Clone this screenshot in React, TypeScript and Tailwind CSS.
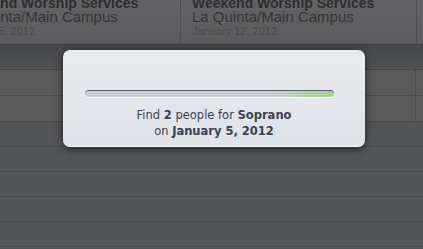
const columns = [
  { title: 'Weekend Worship Services', campus: 'La Quinta/Main Campus', date: 'January 5, 2012' },
  { title: 'Weekend Worship Services', campus: 'La Quinta/Main Campus', date: 'January 12, 2012' },
];

const App = () => {
  return (
    <div className="relative w-[423px] h-[249px] overflow-hidden bg-[#545558] font-['Liberation_Sans',Arial,sans-serif]">
      {/* Header */}
      <div className="flex h-[45px] bg-gradient-to-b from-[#626264] to-[#5c5c5e] border-b border-[#3d3d3f] ml-[-55px]">
        {columns.map((col, i) => (
          <div key={i} className="w-[236px] shrink-0 pl-[11px] border-r border-[#4e4e50] leading-none">
            <div className="mt-[-4px] h-[13px] text-[14px] font-bold text-[#2e2e30] whitespace-nowrap">{col.title}</div>
            <div className="h-[15px] text-[15px] text-[#333335] whitespace-nowrap">{col.campus}</div>
            <div className="mt-[2px] text-[11px] text-[#4a4a4c] whitespace-nowrap">{col.date}</div>
          </div>
        ))}
      </div>

      {/* Sub header band */}
      <div className="h-[25px] bg-gradient-to-b from-[#47484b] to-[#505154] border-b border-[#444547]" />

      {/* Light rows */}
      {[0, 1].map((r) => (
        <div key={r} className="flex h-[26px] bg-[#5a5a5b] border-b border-[#4c4c4e] ml-[-55px]">
          <div className="w-[236px] shrink-0 border-r border-[#4a4a4c]" />
          <div className="w-[235px] shrink-0 border-r border-[#4a4a4c]" />
        </div>
      ))}

      {/* Empty rows */}
      {[0, 1, 2, 3, 4].map((r) => (
        <div key={r} className="h-[25px] bg-[#545558] border-b border-[#4b4c4f]" />
      ))}

      {/* Modal */}
      <div className="absolute left-[63px] top-[50px] w-[302px] h-[97px] rounded-[7px] bg-gradient-to-b from-[#e9ebef] to-[#dfe2e7] border-b border-white shadow-[0_2px_10px_rgba(0,0,0,0.6)] flex flex-col items-center">
        <div className="self-start ml-[22px] mt-[40px] w-[249px] h-[7px] rounded-full border-t border-[#5a5f6a] bg-gradient-to-r from-[#c9ccd3] via-[#c9ccd3] via-75% to-[#a7d08e] shadow-[0_1px_0_#fff]" />
        <div className="mt-[10px] text-center text-[11.5px] leading-[16px] text-[#3a4256] font-['DejaVu_Sans',Verdana,sans-serif]">
          <div>
            Find <span className="font-bold">2</span> people for <span className="font-bold">Soprano</span>
          </div>
          <div>
            on <span className="font-bold">January 5, 2012</span>
          </div>
        </div>
      </div>
    </div>
  );
};

export default App;
